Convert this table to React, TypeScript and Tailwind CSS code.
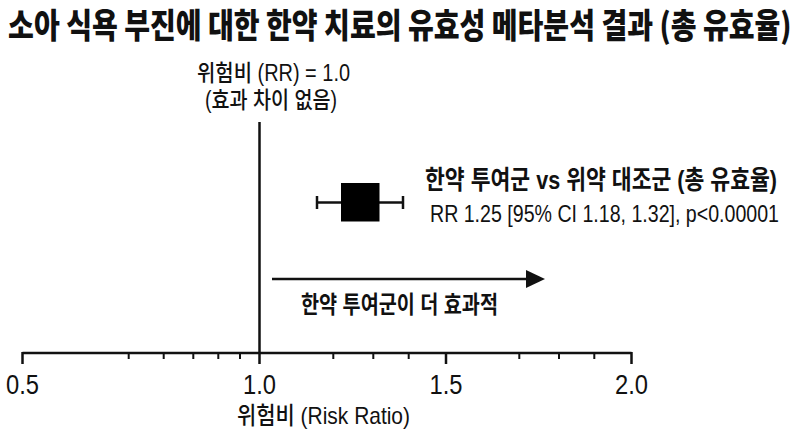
const SANS = "'Liberation Sans', 'Noto Sans CJK KR', sans-serif"

const majorTicks = [
  { x: 22.5, label: '0.5' },
  { x: 259.5, label: '1.0' },
  { x: 446, label: '1.5' },
  { x: 631.5, label: '2.0' },
]

const minorTicks = [128.7, 163.7, 193.3, 218.3, 240, 333.3, 373.3, 408.7, 519.3, 559, 594.3]

function Label({
  x,
  y,
  width,
  size,
  weight = 400,
  anchor = 'start',
  children,
}: {
  x: number
  y: number
  width: number
  size: number
  weight?: number
  anchor?: 'start' | 'middle'
  children: string
}) {
  return (
    <text
      x={x}
      y={y}
      fontSize={size}
      fontWeight={weight}
      fontFamily={SANS}
      textAnchor={anchor}
      textLength={width}
      lengthAdjust="spacingAndGlyphs"
      fill="#111"
    >
      {children}
    </text>
  )
}

function ForestPlot() {
  return (
    <svg width={800} height={386} viewBox="0 50 800 386" className="block">
      {/* null line */}
      <Label x={197} y={81} width={153} size={23} weight={500}>
        위험비 (RR) = 1.0
      </Label>
      <Label x={205} y={108} width={132} size={23} weight={500}>
        (효과 차이 없음)
      </Label>
      <line x1={259.5} y1={122} x2={259.5} y2={354} stroke="#111" strokeWidth={2.5} />

      {/* study */}
      <line x1={317} y1={202.5} x2={403} y2={202.5} stroke="#111" strokeWidth={2.5} />
      <line x1={317} y1={196} x2={317} y2={209} stroke="#111" strokeWidth={2.5} />
      <line x1={403} y1={196} x2={403} y2={209} stroke="#111" strokeWidth={2.5} />
      <rect x={341} y={183} width={38.5} height={38.5} fill="#000" />

      <Label x={425} y={189} width={352} size={26} weight={700}>
        한약 투여군 vs 위약 대조군 (총 유효율)
      </Label>
      <Label x={430} y={222} width={349} size={24}>
        RR 1.25 [95% CI 1.18, 1.32], p&lt;0.00001
      </Label>

      {/* favours arrow */}
      <line x1={272} y1={279} x2={528} y2={279} stroke="#111" strokeWidth={2.5} />
      <polygon points="526,270 545,279 526,288" fill="#111" />
      <Label x={301} y={313} width={197} size={24} weight={700}>
        한약 투여군이 더 효과적
      </Label>

      {/* axis */}
      <line x1={22.5} y1={353} x2={631.5} y2={353} stroke="#111" strokeWidth={2.5} />
      {majorTicks.map((t) => (
        <g key={t.label}>
          <line x1={t.x} y1={352} x2={t.x} y2={364} stroke="#111" strokeWidth={2.5} />
          <Label x={t.x} y={394} width={33} size={27} anchor="middle">
            {t.label}
          </Label>
        </g>
      ))}
      {minorTicks.map((x) => (
        <line key={x} x1={x} y1={352} x2={x} y2={359} stroke="#111" strokeWidth={2} />
      ))}
      <Label x={237} y={424} width={173} size={24} weight={500}>
        위험비 (Risk Ratio)
      </Label>
    </svg>
  )
}

export default function App() {
  return (
    <div className="w-[800px] h-[436px] bg-white overflow-hidden">
      <h1 className="h-[50px] pt-[7px] flex justify-center text-[34px] leading-none font-black text-[#111] font-['Noto_Sans_CJK_KR',sans-serif] whitespace-nowrap">
        <span className="shrink-0 scale-x-[0.825]">
          소아 식욕 부진에 대한 한약 치료의 유효성 메타분석 결과 (총 유효율)
        </span>
      </h1>
      <ForestPlot />
    </div>
  )
}
